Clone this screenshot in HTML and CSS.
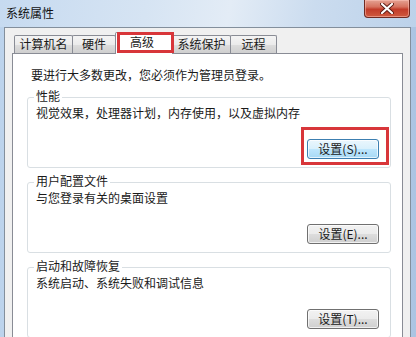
FILE: index.html
```html
<!DOCTYPE html>
<html lang="zh-CN">
<head>
<meta charset="utf-8">
<link rel="stylesheet" href="styles.css">
</head>
<body>
<div class="frame">
  <div class="titlebar">
    <div class="title">系统属性</div>
    <div class="close">
      <svg width="14" height="11" viewBox="0 0 14 11"><path d="M2 1 L12 10 M12 1 L2 10" stroke="#5a1b14" stroke-width="4" stroke-linecap="round"/><path d="M2 1 L12 10 M12 1 L2 10" stroke="#ffffff" stroke-width="2.2" stroke-linecap="round"/></svg>
    </div>
  </div>
  <div class="window">
    <div class="tabs">
      <div class="tab tab-w59">计算机名</div>
      <div class="tab tab-w44">硬件</div>
      <div class="tab tab-selected">高级</div>
      <div class="tab tab-w59">系统保护</div>
      <div class="tab tab-w47">远程</div>
    </div>
    <div class="panel">
      <div class="intro">要进行大多数更改，您必须作为管理员登录。</div>
      <div class="group">
        <div class="group-title">性能</div>
        <div class="group-desc">视觉效果，处理器计划，内存使用，以及虚拟内存</div>
        <div class="btn btn-focus">设置(S)...</div>
      </div>
      <div class="group">
        <div class="group-title">用户配置文件</div>
        <div class="group-desc">与您登录有关的桌面设置</div>
        <div class="btn">设置(E)...</div>
      </div>
      <div class="group">
        <div class="group-title">启动和故障恢复</div>
        <div class="group-desc">系统启动、系统失败和调试信息</div>
        <div class="btn">设置(T)...</div>
      </div>
    </div>
  </div>
</div>
</body>
</html>
```
FILE: styles.css
```css
html, body {
  margin: 0;
  padding: 0;
}
body {
  width: 416px;
  height: 337px;
  overflow: hidden;
  font-family: "Noto Sans CJK SC", "Liberation Sans", sans-serif;
  font-size: 12px;
  color: #1a1a1a;
  background: linear-gradient(to right, #bcd3ec 0%, #cfdff1 30%, #dbe7f4 55%, #c6d9ee 80%, #abc4e2 100%);
}
.frame {
  display: flex;
  flex-direction: column;
  height: 337px;
}
.titlebar {
  height: 27px;
  display: flex;
  align-items: flex-start;
  flex-shrink: 0;
  background: linear-gradient(100deg, #c6daf0 0%, #d6e4f3 35%, #e3ecf6 55%, #cbdcef 75%, #bcd2ea 100%);
}
.title {
  padding: 5px 0 0 6px;
  line-height: 16px;
  color: #111;
}
.close {
  margin-left: auto;
  margin-right: 6px;
  width: 46px;
  height: 18px;
  box-sizing: border-box;
  border: 1px solid #6f2a22;
  border-top: none;
  border-radius: 0 0 4px 4px;
  background: linear-gradient(#e4a293 0%, #d6725f 40%, #c23c2a 55%, #cf5a3f 100%);
  display: flex;
  align-items: center;
  justify-content: center;
  box-shadow: inset 0 0 0 1px rgba(255, 200, 190, 0.5);
}
.window {
  margin-left: 4px;
  width: 407px;
  flex: 1;
  box-sizing: border-box;
  border: 1px solid #838f9c;
  border-bottom: none;
  background: #f0f0f0;
  padding: 4px 7px 0 7px;
  display: flex;
  flex-direction: column;
}
.tabs {
  height: 21px;
  display: flex;
  align-items: flex-end;
  padding-left: 2px;
  flex-shrink: 0;
}
.tab {
  height: 18px;
  box-sizing: border-box;
  border: 1px solid #898c95;
  border-bottom: none;
  border-radius: 2px 2px 0 0;
  background: linear-gradient(#f4f4f4 0%, #ebebeb 50%, #dddddd 51%, #cfcfcf 100%);
  line-height: 16px;
  text-align: center;
  margin-left: -1px;
  color: #1a1a1a;
}
.tab:first-child {
  margin-left: 0;
}
.tab-w59 { width: 59px; }
.tab-w44 { width: 44px; }
.tab-w47 { width: 47px; }
.tab-selected {
  width: 58px;
  height: 22px;
  margin-bottom: -1px;
  background: #ffffff;
  position: relative;
  z-index: 1;
  line-height: 18px;
  padding-right: 4px;
}
.tab-selected::after {
  content: "";
  position: absolute;
  left: 1px;
  right: -2px;
  top: -1px;
  bottom: 1px;
  border: 3px solid #d8363a;
}
.panel {
  flex: 1;
  border: 1px solid #898c95;
  border-bottom: none;
  background: #ffffff;
  padding: 13px 11px 0 14px;
}
.intro {
  padding-left: 4px;
  line-height: 16px;
}
.group {
  margin-top: 14px;
  height: 71px;
  box-sizing: border-box;
  border: 1px solid #d9dfe3;
  border-radius: 3px;
  display: flex;
  flex-direction: column;
  padding: 0 11px 8px 6px;
  flex-shrink: 0;
}
.group-title {
  margin-top: -10px;
  align-self: flex-start;
  background: #ffffff;
  padding: 0 2px;
  line-height: 16px;
}
.group-desc {
  margin-top: 1px;
  padding-left: 2px;
  line-height: 16px;
}
.btn {
  margin-top: auto;
  align-self: flex-end;
  width: 72px;
  height: 20px;
  box-sizing: border-box;
  border: 1px solid #707070;
  border-radius: 3px;
  background: linear-gradient(#f2f2f2 0%, #ebebeb 50%, #dddddd 51%, #cfcfcf 100%);
  box-shadow: inset 0 0 0 1px rgba(255, 255, 255, 0.7);
  text-align: center;
  line-height: 18px;
  color: #1a1a1a;
  position: relative;
}
.btn-focus {
  border-color: #3c7fb1;
  background: linear-gradient(#eaf6fd 0%, #d9f0fc 50%, #bee6fd 51%, #a7d9f5 100%);
}
.btn-focus::after {
  content: "";
  position: absolute;
  left: -7px;
  right: -11px;
  top: -13px;
  bottom: -7px;
  border: 3px solid #d8363a;
}
```
